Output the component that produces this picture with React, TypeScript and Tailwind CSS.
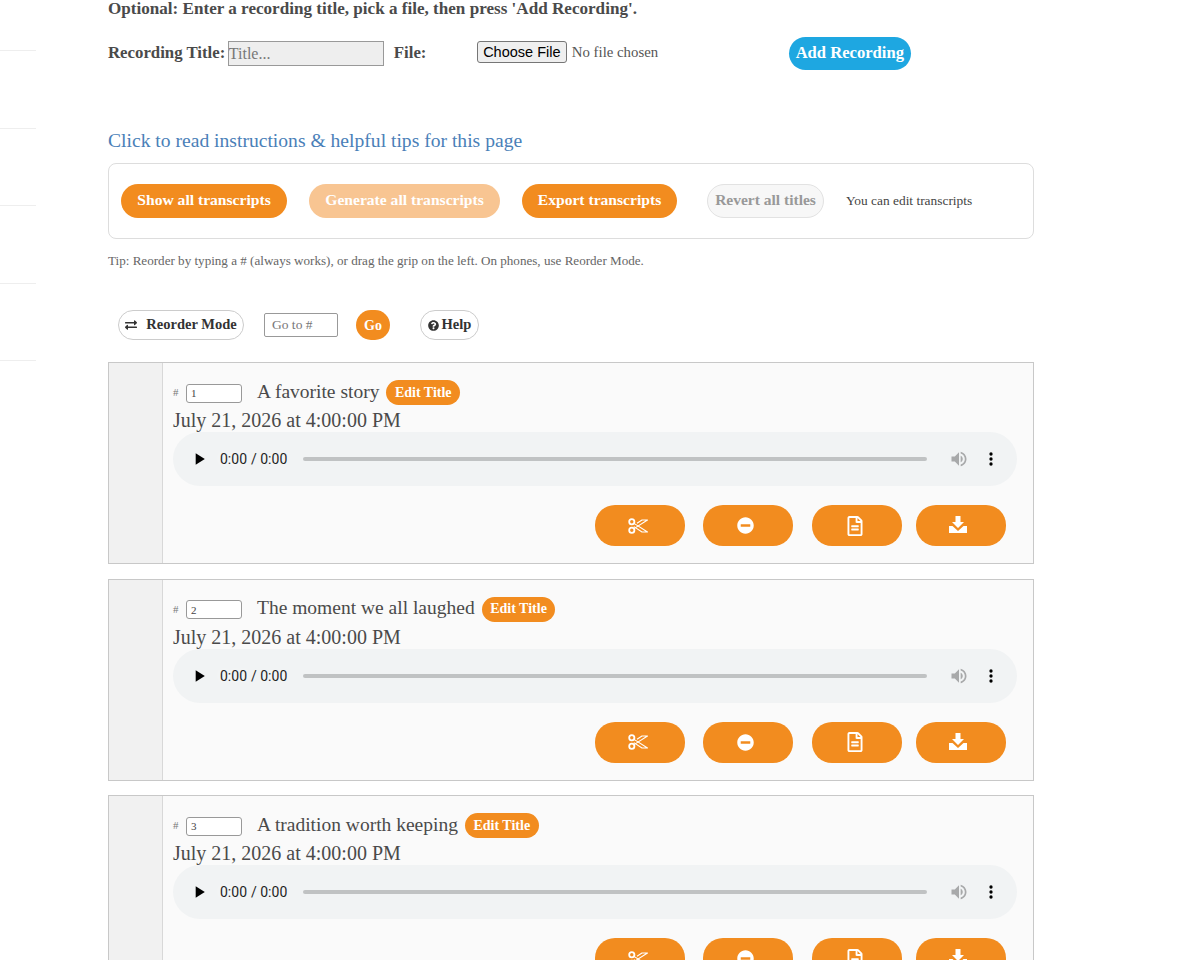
import React from 'react';
import { FaMinusCircle, FaRegFileAlt, FaExchangeAlt, FaQuestionCircle } from 'react-icons/fa';

const serif = 'font-["Liberation_Serif","DejaVu_Serif",serif]';

const recordings = [
    { n: '1', title: 'A favorite story' },
    { n: '2', title: 'The moment we all laughed' },
    { n: '3', title: 'A tradition worth keeping' },
];

const ScissorsIcon = () => (
    <svg width="20" height="16" viewBox="0 0 20 16" fill="none" stroke="currentColor">
        <circle cx="3.8" cy="3.8" r="2.6" strokeWidth="1.8" />
        <circle cx="3.8" cy="12.2" r="2.6" strokeWidth="1.8" />
        <path d="M6 5.4 L19.5 14 L14 14 L5.8 8.6" strokeWidth="1.1" strokeLinejoin="round" />
        <path d="M6 10.6 L19.5 2 L14 2 L9 5.3" strokeWidth="1.1" strokeLinejoin="round" />
    </svg>
);

const TrayDownloadIcon = () => (
    <svg width="18" height="17" viewBox="0 0 18 17" fill="currentColor" className="-mt-[2px] -ml-[1px]">
        <path d="M6.5 0h5v6H15l-6 6-6-6h3.5z" />
        <path d="M0 10h3.5l5.5 5 5.5-5H18v7H0z" />
    </svg>
);

const ActionButton = ({ children, className }: { children: React.ReactNode; className: string }) => (
    <button className={`w-[90px] h-[41px] pr-[5px] rounded-[20px] bg-[#f28c1f] text-white flex items-center justify-center ${className}`}>
        {children}
    </button>
);

const RecordingCard = ({ n, title }: { n: string; title: string }) => (
    <div className="w-[926px] h-[202px] border border-[#c8c8c8] flex shrink-0 bg-[#fafafa]">
        <div className="w-[54px] bg-[#f1f1f1] border-r border-[#d8d8d8] shrink-0" />
        <div className="flex-1 pl-[10px] pr-[16px] pt-[17px]">
            <div className="flex items-center h-[25px]">
                <span className="text-[11px] text-[#777] w-[13px]">#</span>
                <input readOnly value={n} className="w-[56px] h-[19px] mt-[1px] border border-[#999] rounded-[3px] bg-white text-[11px] text-[#444] pl-[4px] outline-none" />
                <span className="ml-[15px] -mt-[2px] text-[19.5px] text-[#4a4a4a]">{title}</span>
                <span className="ml-[7px] h-[25px] px-[8.5px] pb-[1px] rounded-full bg-[#f28c1f] text-white text-[14px] font-bold flex items-center">Edit Title</span>
            </div>
            <div className="text-[20px] leading-[24px] mt-[3px] text-[#4a4a4a]">July 21, 2026 at 4:00:00 PM</div>
            <audio controls preload="none" src="recording.mp3" className="w-[844px] h-[54px] block" />
            <div className="flex justify-end mt-[19px] pr-[11px]">
                <ActionButton className="mr-[18px]"><ScissorsIcon /></ActionButton>
                <ActionButton className="mr-[19px]"><FaMinusCircle size={17} /></ActionButton>
                <ActionButton className="mr-[14px]"><FaRegFileAlt size={20} /></ActionButton>
                <ActionButton className=""><TrayDownloadIcon /></ActionButton>
            </div>
        </div>
    </div>
);

export default function App() {
    return (
        <div className={`w-[1200px] h-[960px] overflow-hidden bg-white flex text-[#4a4a4a] ${serif}`}>
            {/* Sidebar stubs, mostly scrolled off */}
            <div className="w-[36px] shrink-0 pt-[50px]">
                {[0, 1, 2, 3, 4].map((i) => (
                    <div key={i} className="h-[77.5px] border-t border-[#eeeeee]" />
                ))}
            </div>

            <div className="pl-[72px] flex-1">
                <div className="text-[17.1px] font-bold leading-[18px]">
                    Optional: Enter a recording title, pick a file, then press 'Add Recording'.
                </div>

                <div className="flex items-center mt-[19px] h-[33px] font-bold text-[16.8px]">
                    <span className="-mt-[2px]">Recording Title:</span>
                    <input placeholder="Title..." className="w-[156px] h-[25px] ml-[2.5px] border border-[#999] bg-[#eeeeee] text-[16px] font-normal placeholder:text-[#777] outline-none" />
                    <span className="ml-[10px] w-[83px] -mt-[2px]">File:</span>
                    <input type="file" className='w-[260px] -mt-[2px] font-normal text-[14.8px] text-[#555] file:h-[22px] file:w-[90px] file:mr-[5px] file:border file:border-[#767676] file:rounded-[3px] file:bg-[#efefef] file:text-black file:text-[14.5px] file:font-["Liberation_Sans",sans-serif]' />
                    <button className="ml-[52px] h-[33px] w-[122px] rounded-full bg-[#1ea7e1] text-white text-[16.6px] font-bold">Add Recording</button>
                </div>

                <div className="mt-[58px] text-[#4a80b8] text-[19.6px] leading-[26px]">Click to read instructions &amp; helpful tips for this page</div>

                <div className="w-[926px] h-[76px] mt-[9px] border border-[#dddddd] rounded-[8px] flex items-center pl-[12px]">
                    <button className="h-[34px] w-[166px] pb-[2px] rounded-full bg-[#f28c1f] text-white text-[15.6px] font-bold">Show all transcripts</button>
                    <button className="ml-[22px] h-[34px] w-[191px] pb-[2px] rounded-full bg-[#f8c592] text-white text-[15.6px] font-bold">Generate all transcripts</button>
                    <button className="ml-[22px] h-[34px] w-[155px] pb-[2px] rounded-full bg-[#f28c1f] text-white text-[15.6px] font-bold">Export transcripts</button>
                    <button className="ml-[30px] h-[34px] w-[117px] pb-[2px] rounded-full bg-[#f7f7f7] border border-[#e2e2e2] text-[#999] text-[15.5px] font-bold">Revert all titles</button>
                    <span className="ml-[22px] text-[13.4px] text-[#444]">You can edit transcripts</span>
                </div>

                <div className="mt-[14px] text-[13.1px] leading-[16px] text-[#666]">
                    Tip: Reorder by typing a # (always works), or drag the grip on the left. On phones, use Reorder Mode.
                </div>

                <div className="flex items-center h-[30px] mt-[41px] pl-[10px]">
                    <button className="w-[126px] h-[30px] rounded-full border border-[#cccccc] flex items-center justify-center text-[14.5px] font-bold text-[#333]">
                        <FaExchangeAlt size={12} className="mr-[9px]" />Reorder Mode
                    </button>
                    <input placeholder="Go to #" className="ml-[20px] w-[74px] h-[24px] border border-[#999] rounded-[2px] pl-[7px] text-[13.5px] placeholder:text-[#777] outline-none" />
                    <button className="ml-[18px] w-[34px] h-[30px] rounded-full bg-[#f28c1f] text-white text-[14px] font-bold">Go</button>
                    <button className="ml-[30px] w-[59px] h-[30px] rounded-full border border-[#cccccc] flex items-center justify-center text-[14.5px] font-bold text-[#333]">
                        <FaQuestionCircle size={11} className="mr-[3px]" />Help
                    </button>
                </div>

                <div className="flex flex-col gap-[14.5px] mt-[22px]">
                    {recordings.map((r) => (
                        <RecordingCard key={r.n} n={r.n} title={r.title} />
                    ))}
                </div>
            </div>
        </div>
    );
}
